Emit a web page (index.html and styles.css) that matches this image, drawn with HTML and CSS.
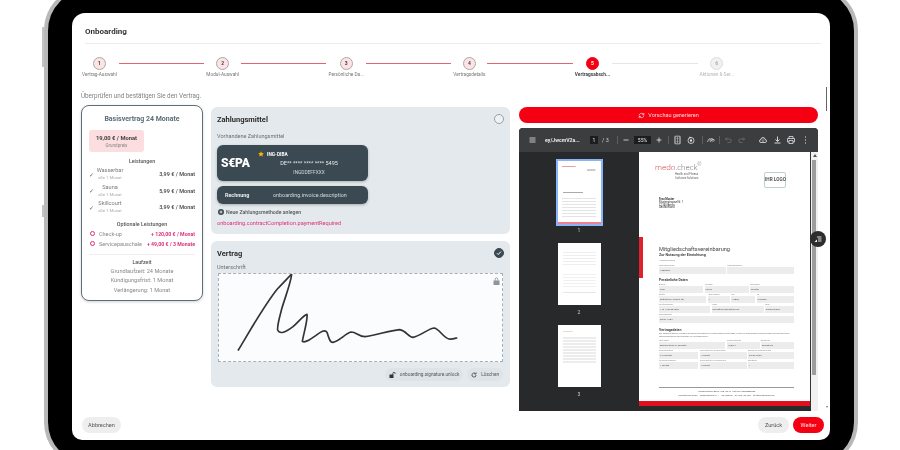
FILE: index.html
```html
<!DOCTYPE html>
<html lang="de">
<head>
  <meta charset="UTF-8" />
  <title>Onboarding</title>
  <link rel="stylesheet" href="styles.css">
</head>
<body>

<div class="device">
  <span class="side-btn side-btn-top"></span>
  <span class="side-btn side-btn-low"></span>

  <div class="screen">
    <div class="screen-title">Onboarding</div>

    <!-- Stepper -->
    <div class="stepper">
      <div class="step done"><span class="dot">1</span><span class="step-label">Vertrag-Auswahl</span></div>
      <span class="step-line"></span>
      <div class="step done"><span class="dot">2</span><span class="step-label">Modul-Auswahl</span></div>
      <span class="step-line"></span>
      <div class="step done"><span class="dot">3</span><span class="step-label">Persönliche Da...</span></div>
      <span class="step-line"></span>
      <div class="step done"><span class="dot">4</span><span class="step-label">Vertragsdetails</span></div>
      <span class="step-line"></span>
      <div class="step current"><span class="dot">5</span><span class="step-label">Vertragsabsch...</span></div>
      <span class="step-line off"></span>
      <div class="step todo"><span class="dot">6</span><span class="step-label">Aktionen &amp; Ser...</span></div>
    </div>

    <p class="intro">Überprüfen und bestätigen Sie den Vertrag.</p>

    <div class="columns">
      <!-- Vertrag Zusammenfassung -->
      <div class="summary">
        <h3 class="summary-title">Basisvertrag 24 Monate</h3>
        <div class="price-box">
          <strong>19,00 € / Monat</strong>
          <span>Grundpreis</span>
        </div>
        <div class="sub-head">Leistungen</div>
        <div class="service">
          <span class="tick">✓</span>
          <div class="service-name">Wasserbar<small>alle 1 Monat</small></div>
          <b>3,99 € / Monat</b>
        </div>
        <div class="service">
          <span class="tick">✓</span>
          <div class="service-name">Sauna<small>alle 1 Monat</small></div>
          <b>5,99 € / Monat</b>
        </div>
        <div class="service">
          <span class="tick">✓</span>
          <div class="service-name">Skillcourt<small>alle 1 Monat</small></div>
          <b>3,99 € / Monat</b>
        </div>
        <div class="sub-head optional-head">Optionale Leistungen</div>
        <div class="option"><i></i><span>Check-up</span><b>+ 120,00 € / Monat</b></div>
        <div class="option"><i></i><span>Servicepauschale</span><b>+ 49,00 € / 3 Monate</b></div>
        <div class="term">
          <div class="sub-head">Laufzeit</div>
          <p>Grundlaufzeit: 24 Monate</p>
          <p>Kündigungsfrist: 1 Monat</p>
          <p>Verlängerung: 1 Monat</p>
        </div>
      </div>

      <div class="middle">
        <!-- Zahlungsmittel -->
        <section class="panel pay-panel">
          <div class="panel-head">
            <h3>Zahlungsmittel</h3>
            <span class="radio"></span>
          </div>
          <div class="panel-label">Vorhandene Zahlungsmittel</div>
          <div class="pay-card sepa-card">
            <span class="sepa-logo">S€PA</span>
            <div class="sepa-info">
              <div class="sepa-bank">
                <svg width="6" height="6" viewBox="0 0 24 24"><path fill="#f5b800" d="M12 1l3.4 7.3 7.9 1-5.8 5.5 1.5 7.9L12 18l-7 3.7 1.5-7.9L.7 9.3l7.9-1z"/></svg>
                <b>ING-DIBA</b>
              </div>
              <div class="sepa-iban">DE** **** **** **** 5495</div>
              <div class="sepa-bic">INGDDEFFXXX</div>
            </div>
          </div>
          <div class="pay-card invoice-card">
            <b>Rechnung</b>
            <span>onboarding.invoice.description</span>
          </div>
          <div class="new-method">
            <svg width="6" height="6" viewBox="0 0 24 24"><circle cx="12" cy="12" r="12" fill="#3b4a52"/><path d="M12 6v12M6 12h12" stroke="#fff" stroke-width="3"/></svg>
            Neue Zahlungsmethode anlegen
          </div>
          <div class="pay-error">onboarding.contractCompletion.paymentRequired</div>
        </section>

        <!-- Vertrag / Unterschrift -->
        <section class="panel sign-panel">
          <div class="panel-head">
            <h3>Vertrag</h3>
            <span class="radio checked">
              <svg width="6" height="6" viewBox="0 0 24 24"><path d="M4 13l5 5L20 6" fill="none" stroke="#fff" stroke-width="4"/></svg>
            </span>
          </div>
          <div class="panel-label">Unterschrift</div>
          <div class="sign-box">
            <svg class="signature" width="283" height="87" viewBox="40 110 849 261">
              <path d="M98 338C130 285 175 205 215 155C232 138 250 118 258 110C256 135 240 175 228 215C222 240 214 265 216 278C222 292 240 285 262 268C280 252 295 232 304 231C307 245 295 285 290 312C298 318 312 308 330 295C345 283 358 275 364 285C370 302 372 316 382 315C400 312 420 288 436 284C452 284 460 298 478 298C510 294 550 280 582 277C602 280 608 300 622 300C645 296 670 272 686 272C702 276 712 300 730 305C738 306 745 304 753 302" fill="none" stroke="#333" stroke-width="5" stroke-linecap="round" stroke-linejoin="round"/>
            </svg>
            <svg class="lock" width="7" height="8" viewBox="0 0 14 16"><path fill="#8b979d" d="M1 7h12v9H1zM3.500 7V4.500a3.500 3.500 0 0 1 7 0V7H9V4.500a2 2 0 0 0-4 0V7z"/></svg>
          </div>
          <div class="sign-actions">
            <span class="pill">
              <svg width="7" height="6" viewBox="0 0 14 12"><path fill="#333" d="M1 5h8v7H1zM7 5V3a3 3 0 0 1 6 0v1h-1.500V3a1.500 1.500 0 0 0-3 0v2z"/></svg>
              onboarding.signature.unlock
            </span>
            <span class="pill">
              <svg width="6" height="6" viewBox="0 0 24 24"><path d="M20 12a8 8 0 1 1-3-6.200M20 2v6h-6" fill="none" stroke="#333" stroke-width="3"/></svg>
              Löschen
            </span>
          </div>
        </section>
      </div>

      <div class="right">
        <div class="generate">
          <svg width="7" height="7" viewBox="0 0 24 24"><path d="M4 12a8 8 0 0 1 14-5l2 2M20 12a8 8 0 0 1-14 5l-2-2M20 3v6h-6M4 21v-6h6" fill="none" stroke="#ffd4d8" stroke-width="2.500"/></svg>
          Vorschau generieren
        </div>

        <!-- PDF Viewer -->
        <div class="pdf">
          <div class="pdf-bar">
            <svg class="ic-menu" width="7" height="6" viewBox="0 0 14 12"><path d="M1 2h12M1 6h12M1 10h12" stroke="#e8eaed" stroke-width="1.600"/></svg>
            <span class="pdf-name">ey/JwcmV2a...</span>
            <span class="pdf-box page-box">1</span>
            <span class="pdf-count">/ 3</span>
            <span class="pdf-sep sep-a"></span>
            <svg class="ic-minus" width="6" height="6" viewBox="0 0 12 12"><path d="M1 6h10" stroke="#e8eaed" stroke-width="1.600"/></svg>
            <span class="pdf-box zoom-box">55%</span>
            <svg class="ic-plus" width="6" height="6" viewBox="0 0 12 12"><path d="M1 6h10M6 1v10" stroke="#e8eaed" stroke-width="1.600"/></svg>
            <span class="pdf-sep sep-b"></span>
            <svg class="ic-fit" width="7" height="9" viewBox="0 0 14 18"><rect x="2" y="1" width="10" height="16" rx="1" fill="none" stroke="#e8eaed" stroke-width="1.800"/><path d="M7 4v10M5 6l2-2 2 2M5 12l2 2 2-2" fill="none" stroke="#e8eaed"/></svg>
            <svg class="ic-rotate" width="8" height="8" viewBox="0 0 16 16"><circle cx="8" cy="9" r="6" fill="none" stroke="#e8eaed" stroke-width="1.600"/><rect x="6" y="7" width="4" height="4" fill="#e8eaed"/><path d="M5 1l4 2-4 2z" fill="#e8eaed"/></svg>
            <span class="pdf-sep sep-c"></span>
            <svg class="ic-draw" width="8" height="8" viewBox="0 0 16 16"><path d="M1 12c3-8 5-8 5-4s2 4 3 1 3-3 6-1M9 4l5 5-2 2-5-5z" fill="none" stroke="#e8eaed" stroke-width="1.400"/></svg>
            <span class="pdf-sep sep-d"></span>
            <svg class="ic-undo" width="7" height="6" viewBox="0 0 14 12"><path d="M4 1L1 4l3 3M1 4h8a3.500 3.500 0 0 1 0 7H5" fill="none" stroke="#77787a" stroke-width="1.400"/></svg>
            <svg class="ic-redo" width="7" height="6" viewBox="0 0 14 12"><path d="M10 1l3 3-3 3M13 4H5a3.500 3.500 0 0 0 0 7h4" fill="none" stroke="#77787a" stroke-width="1.400"/></svg>
            <svg class="ic-save" width="8" height="8" viewBox="0 0 16 16"><path d="M4 13a3 3 0 0 1 0-6 4 4 0 0 1 8 0 3 3 0 0 1 0 6z" fill="none" stroke="#e8eaed" stroke-width="1.600"/><path d="M8 5v6M6 9l2 2 2-2" fill="none" stroke="#e8eaed"/></svg>
            <svg class="ic-down" width="7" height="8" viewBox="0 0 14 16"><path d="M7 1v9M3 7l4 4 4-4M1 14h12" fill="none" stroke="#e8eaed" stroke-width="1.800"/></svg>
            <svg class="ic-print" width="8" height="8" viewBox="0 0 16 16"><path d="M4 5V1h8v4M4 12H1V5h14v7h-3M4 9h8v6H4z" fill="none" stroke="#e8eaed" stroke-width="1.500"/></svg>
            <svg class="ic-more" width="3" height="8" viewBox="0 0 4 16"><path d="M2 1v2M2 7v2M2 13v2" stroke="#e8eaed" stroke-width="2"/></svg>
          </div>

          <div class="pdf-body">
            <div class="thumbs">
              <div class="thumb active"><div class="thumb-lines first"></div></div>
              <span>1</span>
              <div class="thumb"><div class="thumb-lines second"></div></div>
              <span>2</span>
              <div class="thumb"><div class="thumb-lines third"></div></div>
              <span>3</span>
            </div>

            <div class="page">
              <div class="page-top">
                <div class="brand">
                  <div class="brand-name"><em>medo</em>.check<sup>®</sup></div>
                  <div class="brand-sub">Health and Fitness<br>Software Solutions</div>
                </div>
                <div class="your-logo">IHR LOGO</div>
              </div>
              <div class="address"><b>Frau Muster</b><br>Musterstrasse Nr. 1<br>12345 Berlin<br>Deutschland</div>

              <h4 class="doc-title">Mitgliedschaftsvereinbarung</h4>
              <div class="doc-sub">Zur Nutzung der Einrichtung</div>
              <div class="doc-small">Handbuchstelle</div>
              <div class="f-row c2">
                <div class="f"><label>Mitgliedsnummer</label><span>1000038</span></div>
                <div class="f"><label>Vertragsnummer</label><span></span></div>
              </div>

              <div class="doc-head person-head">Persönliche Daten</div>
              <div class="f-row c3">
                <div class="f"><label>Anrede</label><span>Frau</span></div>
                <div class="f"><label>Vorname</label><span>Paula</span></div>
                <div class="f"><label>Nachname</label><span>Muster</span></div>
              </div>
              <div class="f-row c4">
                <div class="f"><label>Straße</label><span>Mitterfeld-Hausen Str.</span></div>
                <div class="f"><label>Hausnummer</label><span>4</span></div>
                <div class="f"><label>PLZ</label><span>16809</span></div>
                <div class="f"><label>Ort</label><span>Wriezen</span></div>
              </div>
              <div class="f-row c5">
                <div class="f"><label>Telefonnummer</label><span>+49 1234567890</span></div>
                <div class="f"><label>E-Mail</label><span>paula@musterstudio.de</span></div>
                <div class="f"><label>Land</label><span>Deutschland</span></div>
              </div>
              <div class="f-row c1">
                <div class="f"><label>Geburtsdatum</label><span>08.07.1982</span></div>
              </div>

              <div class="doc-head data-head">Vertragsdaten</div>
              <p class="doc-para">Die Mitgliedsgebühr, einmalig abgebuchten AGB und Leistungsbeschreibungen, sowie die Ergänzungsvereinbarungen des persönlichen Mitgliedsbeitrags sind kündbar bis Vertragsbeginn.</p>
              <div class="f-row c6">
                <div class="f"><label>Tarif Name</label><span>Basisvertrag 24 Monate</span></div>
                <div class="f"><label>Mitgliedsbeitrag</label><span>19,00 €</span></div>
                <div class="f"><label>Zahlweise</label><span>Monatlich</span></div>
              </div>
              <div class="f-row c7">
                <div class="f"><label>Mindestlaufzeit</label><span>24 Monate</span></div>
                <div class="f"><label>Bindungsfrist in Grundvertrag</label><span>1 Monat</span></div>
                <div class="f"><label>Beginn der Mitgliedschaft</label><span>03.09.2026</span></div>
              </div>
              <div class="f-row c7">
                <div class="f"><label>Verlängerungstage</label><span>1 Monat</span></div>
                <div class="f"><label>Bindungsfrist in Verlängerung</label><span>1 Monat</span></div>
                <div class="f"><label>Startkarte</label><span>1</span></div>
              </div>

              <div class="doc-foot">
                <div>Handelsregister Berlin HRB 12345 · USt-IdNr. DE000000000</div>
                <div>Musterstudio GmbH · Musterstrasse Nr. 1 · 12345 Berlin · Tel. 030 1234567 · info@musterstudio.de</div>
              </div>
              <div class="doc-band"></div>
              <span class="page-mark"></span>
            </div>

            <div class="pdf-scroll"><span class="scroll-up"></span><span class="scroll-thumb"></span></div>
          </div>
        </div>
      </div>
    </div>

    <div class="footer">
      <button class="btn btn-cancel">Abbrechen</button>
      <span class="footer-gap"></span>
      <button class="btn">Zurück</button>
      <button class="btn btn-red">Weiter</button>
    </div>

    <span class="outer-scroll"></span>
    <span class="outer-arrow"></span>
    <span class="float-btn">
      <svg width="8" height="7" viewBox="0 0 16 14"><path d="M6 1h9v2H6zM8 5h7v2H8zM8 9h7v2H8z" fill="#ddd"/><path d="M1 12l5-5v5z" fill="#fff"/></svg>
    </span>
  </div>
</div>

</body>
</html>
```

FILE: styles.css
```css
html, body {
  margin: 0;
  height: 450px;
  overflow: hidden;
}
body {
  display: flex;
  align-items: flex-start;
  background: #fff;
  font-family: 'Roboto', 'Liberation Sans', sans-serif;
  color: #444;
}
h3, h4, p { margin: 0; }

/* Tablet */
.device {
  position: relative;
  flex: none;
  box-sizing: border-box;
  width: 814px;
  height: 483px;
  margin: -15px 0 0 44px;
  padding: 24px;
  background: #000;
  border: 4px solid #b8b8b8;
  border-radius: 46px;
  filter: blur(0.5px);
}
.side-btn {
  position: absolute;
  left: -6px;
  width: 2px;
  background: #c4c4c4;
}
.side-btn-top { top: 38px; height: 40px; }
.side-btn-low { top: 216px; height: 12px; }

.screen {
  position: relative;
  display: flex;
  flex-direction: column;
  box-sizing: border-box;
  height: 427px;
  padding: 0 13px 6px 9px;
  background: #fff;
  border-radius: 13px 13px 10px 10px;
}
.screen-title {
  flex: none;
  height: 30px;
  margin: 0 -4px 0 4px;
  border-bottom: 1px solid #ececec;
  font-size: 8px;
  font-weight: 700;
  line-height: 38px;
  color: #333;
}

/* Stepper */
.stepper {
  display: flex;
  flex: none;
  align-items: flex-start;
  margin: 13px 83px 0 1px;
}
.step {
  display: flex;
  flex: none;
  flex-direction: column;
  align-items: center;
}
.dot {
  box-sizing: border-box;
  width: 13px;
  height: 13px;
  border-radius: 50%;
  font-size: 5px;
  font-weight: 700;
  line-height: 11px;
  text-align: center;
}
.done .dot { background: #fde3e5; border: 1px solid #a9a9a9; color: #444; }
.current .dot { background: #f40012; border: 1px solid #f40012; color: #fff; }
.todo .dot { background: #f1f1f1; border: 1px solid #dcdcdc; color: #aaa; }
.step-label {
  margin-top: 2px;
  font-size: 4.750px;
  line-height: 6px;
  color: #777;
  white-space: nowrap;
}
.current .step-label { font-weight: 700; color: #444; }
.todo .step-label { color: #b5b5b5; }
.step-line {
  flex: 1;
  height: 1.500px;
  margin: 5.500px 2px 0;
  background: #e0656e;
}
.step-line.off { background: #e6e6e6; }

.intro {
  flex: none;
  margin-top: 14px;
  font-size: 6.300px;
  line-height: 8px;
  color: #808080;
}

.columns {
  display: flex;
  flex: none;
  gap: 8px;
  align-items: flex-start;
  margin-top: 5px;
}

/* Left summary */
.summary {
  flex: none;
  box-sizing: border-box;
  width: 122px;
  height: 196px;
  padding: 8px 7px 0;
  background: #fff;
  border: 1px solid #5f6f78;
  border-radius: 8px;
  box-shadow: 0 1px 3px rgba(0,0,0,0.18);
  text-align: center;
}
.summary-title {
  font-size: 7px;
  font-weight: 700;
  line-height: 10px;
  color: #5c6e79;
}
.price-box {
  display: flex;
  flex-direction: column;
  width: 55px;
  height: 22px;
  margin-top: 6px;
  background: #fcdde0;
  border-radius: 3px;
  justify-content: center;
}
.price-box strong { font-size: 5.800px; line-height: 8px; color: #444; }
.price-box span { font-size: 4.500px; line-height: 7px; color: #888; }
.sub-head {
  font-size: 5.300px;
  font-weight: 500;
  line-height: 8px;
  color: #555;
}
.price-box + .sub-head { margin-top: 5px; }
.service {
  display: flex;
  align-items: center;
  height: 16.500px;
}
.tick { width: 7px; font-size: 6px; color: #666; text-align: left; }
.service-name {
  display: flex;
  flex-direction: column;
  width: 28px;
  font-size: 5.600px;
  line-height: 8px;
  color: #7a7a7a;
}
.service-name small { font-size: 4.300px; color: #aaa; }
.service b, .option b {
  margin-left: auto;
  font-size: 5.500px;
  font-weight: 500;
  white-space: nowrap;
}
.service:nth-of-type(3) { margin-top: 1px; }
.optional-head { margin-top: 4px; }
.option {
  display: flex;
  align-items: center;
  height: 10px;
  font-size: 5.500px;
  color: #888;
}
.optional-head + .option { margin-top: 1px; }
.option i {
  box-sizing: border-box;
  width: 5px;
  height: 5px;
  margin: 0 4px 0 1px;
  border: 1px solid #e0307a;
  border-radius: 50%;
}
.option span { white-space: nowrap; }
.option b { font-size: 5.200px; font-weight: 700; color: #e0307a; }
.term {
  margin-top: 5px;
  padding-top: 3px;
  border-top: 1px solid #eee;
}
.term p {
  font-size: 5.600px;
  line-height: 9.600px;
  color: #888;
}
.term .sub-head { margin-bottom: 1px; }

/* Middle panels */
.middle {
  display: flex;
  flex: none;
  flex-direction: column;
  gap: 7px;
  width: 299px;
  padding-top: 2px;
}
.panel {
  box-sizing: border-box;
  padding: 0 6px;
  background: #e3e9ec;
  border-radius: 6px;
}
.pay-panel { height: 127px; }
.sign-panel { height: 146px; }
.panel-head {
  display: flex;
  align-items: center;
  justify-content: space-between;
  height: 24px;
}
.panel-head h3 {
  font-size: 7.500px;
  font-weight: 700;
  color: #2c2c2c;
}
.radio {
  display: flex;
  box-sizing: border-box;
  width: 10px;
  height: 10px;
  align-items: center;
  justify-content: center;
  background: #eef2f4;
  border: 1px solid #9aa2a6;
  border-radius: 50%;
}
.radio.checked { background: #3b4a52; border-color: #3b4a52; }
.panel-label {
  font-size: 5.500px;
  line-height: 8px;
  color: #6f6f6f;
}
.pay-panel .panel-label { margin-top: 1px; }
.sign-panel .panel-label { margin-top: -2px; }
.pay-card {
  display: flex;
  box-sizing: border-box;
  width: 151px;
  align-items: center;
  background: #3b4a52;
  border-radius: 6px;
  box-shadow: 0 1px 3px rgba(0,0,0,0.25);
  color: #e8ecee;
}
.sepa-card { height: 36px; margin-top: 5px; padding-left: 4px; }
.sepa-logo {
  width: 35px;
  font-size: 12px;
  font-weight: 900;
  letter-spacing: -0.2px;
  color: #fff;
}
.sepa-info { flex: 1; padding-right: 6px; text-align: center; }
.sepa-bank {
  display: flex;
  align-items: center;
  gap: 3px;
  padding-left: 2px;
  font-size: 4.800px;
  line-height: 9px;
  color: #fff;
}
.sepa-iban { font-size: 5.500px; line-height: 9px; }
.sepa-bic { font-size: 4.800px; line-height: 9px; color: #d3d9dc; }
.invoice-card { height: 18px; margin-top: 5px; padding-left: 8px; font-size: 5.400px; }
.invoice-card b { width: 48px; }
.invoice-card span { color: #d3d9dc; }
.new-method {
  display: flex;
  align-items: center;
  gap: 2px;
  margin: 4px 0 0 1px;
  font-size: 5.200px;
  font-weight: 500;
  line-height: 8px;
  color: #555;
}
.pay-error {
  margin-top: 3px;
  font-size: 5.600px;
  line-height: 8px;
  color: #e0307a;
}
.sign-box {
  position: relative;
  box-sizing: border-box;
  width: 285px;
  height: 89px;
  margin: 2px 0 0 1px;
  background: #fbfcfd;
  border: 1px dashed #a8aeb2;
}
.signature { display: block; }
.lock { position: absolute; top: 3px; right: 2px; }
.sign-actions {
  display: flex;
  justify-content: flex-end;
  gap: 4px;
  margin: 6px 1px 0 0;
}
.pill {
  display: flex;
  align-items: center;
  gap: 4px;
  height: 13px;
  padding: 0 4px;
  background: #dde3e6;
  border-radius: 7px;
  font-size: 4.700px;
  color: #555;
}

/* Right column */
.right {
  flex: none;
  width: 299px;
  margin-left: 1px;
  padding-top: 2px;
}
.generate {
  display: flex;
  align-items: center;
  justify-content: center;
  gap: 3px;
  height: 16px;
  background: #f40012;
  border-radius: 8px;
  font-size: 5.500px;
  color: #ffd4d8;
}
.pdf {
  height: 283px;
  margin-top: 5px;
  background: #28292b;
  border-radius: 4px 4px 0 0;
  overflow: hidden;
}
.pdf-bar {
  position: relative;
  height: 24px;
  background: #3c3d3f;
}
/* toolbar items sit on the viewer's own coordinates */
.pdf-bar > * { position: absolute; top: 50%; transform: translateY(-50%); }
.ic-menu { left: 10px; }
.pdf-name { left: 26px; font-size: 5.200px; font-weight: 700; color: #e8eaed; }
.pdf-box {
  height: 8px;
  background: #1c1d1f;
  font-size: 5px;
  line-height: 8px;
  color: #e8eaed;
  text-align: center;
}
.page-box { left: 71px; width: 8px; }
.pdf-count { left: 83px; font-size: 5.500px; color: #cfd1d4; }
.pdf-sep { width: 1px; height: 8px; background: #5d5e60; }
.sep-a { left: 98px; }
.ic-minus { left: 104px; }
.zoom-box { left: 115px; width: 17px; }
.ic-plus { left: 137px; }
.sep-b { left: 149px; }
.ic-fit { left: 155px; }
.ic-rotate { left: 168px; }
.sep-c { left: 183px; }
.ic-draw { left: 188px; }
.sep-d { left: 200px; }
.ic-undo { left: 206px; }
.ic-redo { left: 219px; }
.ic-save { left: 240px; }
.ic-down { left: 255px; }
.ic-print { left: 268px; }
.ic-more { left: 285px; }

.pdf-body {
  display: flex;
  height: 259px;
}
.thumbs {
  display: flex;
  flex: none;
  flex-direction: column;
  align-items: center;
  box-sizing: border-box;
  width: 120px;
  padding-top: 7px;
  font-size: 5px;
  line-height: 8px;
  color: #cfd1d4;
}
.thumb {
  box-sizing: border-box;
  width: 43px;
  height: 62px;
  margin-bottom: 3px;
  padding: 5px 5px;
  background: #fff;
}
.thumbs span { height: 9px; margin-bottom: 8px; }
.thumb.active {
  width: 47px;
  height: 67px;
  border: 2px solid #8ab4f8;
  margin-bottom: 0;
  box-shadow: inset 0 -2px 0 #f0808a;
}
.thumb-lines { height: 100%; }
.thumb-lines.first {
  margin-left: -1px;
  background:
    linear-gradient(#e5a2a6, #e5a2a6) 0 0 / 40% 1px no-repeat,
    linear-gradient(#ccc, #ccc) 100% 3px / 25% 2px no-repeat,
    linear-gradient(#aaa, #aaa) 10% 26px / 60% 1px no-repeat,
    repeating-linear-gradient(#fff 0 2px, #e4e4e4 2px 3px) 0 30px / 100% 22px no-repeat;
}
.thumb-lines.second {
  background:
    repeating-linear-gradient(#fff 0 2px, #eee 2px 3px) 0 2px / 100% 15px no-repeat,
    repeating-linear-gradient(#fff 0 2px, #f0f0f0 2px 3px) 0 24px / 100% 15px no-repeat,
    linear-gradient(#e6e6e6, #e6e6e6) 0 44px / 100% 1px no-repeat;
}
.thumb-lines.third {
  background:
    linear-gradient(#ddd, #ddd) 0 1px / 30% 1px no-repeat,
    repeating-linear-gradient(#fff 0 1px, #ececec 1px 3px) 0 6px / 100% 28px no-repeat;
}

/* PDF page */
.page {
  position: relative;
  flex: none;
  box-sizing: border-box;
  width: 172px;
  height: 256px;
  padding: 10px 16px 0 20px;
  background: #fff;
  border-right: 1px solid #333;
  color: #555;
}
.page-top {
  display: flex;
  justify-content: space-between;
  height: 26px;
}
.brand-name {
  margin-left: -4px;
  font-family: 'Open Sans', 'Liberation Sans', sans-serif;
  font-size: 7.800px;
  font-weight: 300;
  line-height: 10px;
  color: #666;
}
.brand-name em { font-style: normal; color: #c4323c; }
.brand-name sup { font-size: 5px; line-height: 0; }
.brand-sub {
  margin: 1px 0 0 16px;
  font-size: 2.800px;
  line-height: 3.500px;
  color: #666;
}
.your-logo {
  width: 20px;
  height: 14px;
  margin: 10px 8px 0 0;
  border: 1px solid #bcd0cc;
  border-radius: 2px;
  font-size: 4.700px;
  font-weight: 700;
  line-height: 14px;
  text-align: center;
  white-space: nowrap;
  color: #555;
}
.address {
  margin-top: 10px;
  font-size: 2.800px;
  line-height: 2.800px;
  color: #333;
}
.doc-title {
  margin-top: 37px;
  font-size: 5.600px;
  font-weight: 400;
  line-height: 7px;
  color: #444;
}
.doc-sub {
  font-size: 3.700px;
  font-weight: 700;
  line-height: 5px;
  color: #444;
}
.doc-small { margin: 1px 0; font-size: 2.300px; line-height: 4px; color: #888; }
.doc-head {
  font-size: 3.500px;
  font-weight: 700;
  line-height: 5px;
  color: #444;
}
.person-head { margin-top: 4px; }
.data-head { margin-top: 5px; }
.doc-para {
  font-size: 2.200px;
  line-height: 2.900px;
  color: #777;
}
.f-row { display: grid; column-gap: 1.500px; }
.c1 { grid-template-columns: 1fr; }
.c2 { grid-template-columns: 1fr 1fr; }
.c3 { grid-template-columns: 1fr 1fr 1fr; }
.c4 { grid-template-columns: 47px 22px 24px 1fr; }
.c5 { grid-template-columns: 51px 52px 1fr; }
.c6 { grid-template-columns: 66px 33px 1fr; }
.c7 { grid-template-columns: 39px 47px 1fr; }
.f label {
  display: block;
  height: 3px;
  font-size: 2px;
  line-height: 3px;
  color: #888;
  white-space: nowrap;
  overflow: hidden;
}
.f span {
  display: block;
  height: 7px;
  padding-left: 1px;
  background: #ececec;
  font-size: 2.500px;
  line-height: 7px;
  color: #555;
  white-space: nowrap;
  overflow: hidden;
}
.doc-foot {
  margin: 18px 0 0;
  padding-top: 2px;
  border-top: 1px solid #999;
  font-size: 2.200px;
  line-height: 4px;
  text-align: center;
  color: #555;
  white-space: nowrap;
}
.doc-band {
  position: absolute;
  left: 0;
  right: 0;
  bottom: 0;
  height: 5px;
  background: #e0101e;
  border-bottom: 2px solid #2a2a2a;
}
.page-mark {
  position: absolute;
  left: 0;
  top: 85px;
  width: 4px;
  height: 41px;
  background: #e0202c;
}
.pdf-scroll {
  position: relative;
  flex: 1;
  background: #f1f1f1;
}
.scroll-up {
  position: absolute;
  top: 2px;
  left: 2px;
  border: 2px solid transparent;
  border-top: 0;
  border-bottom: 3px solid #555;
}
.scroll-thumb {
  position: absolute;
  top: 8px;
  left: 1px;
  width: 4px;
  height: 215px;
  background: #9d9d9d;
}

.footer {
  display: flex;
  flex: none;
  align-items: center;
  gap: 4px;
  margin: 6px -7px 0 1px;
}
.footer-gap { flex: 1; }
.btn {
  width: 31px;
  height: 16px;
  padding: 0;
  background: #eeeeee;
  border: none;
  border-radius: 8px;
  font-family: inherit;
  font-size: 5.600px;
  color: #555;
}
.btn-cancel { width: 39px; }
.btn-red { background: #f40012; color: #ffdfe1; }

.outer-scroll {
  position: absolute;
  top: 74px;
  right: 3px;
  width: 1px;
  height: 24px;
  background: #666;
}
.outer-arrow {
  position: absolute;
  top: 393px;
  right: 2px;
  border: 1.500px solid transparent;
  border-bottom: 0;
  border-top: 2px solid #777;
}
.float-btn {
  position: absolute;
  top: 218px;
  left: 738px;
  display: flex;
  width: 16px;
  height: 16px;
  align-items: center;
  justify-content: center;
  background: #2b2d2f;
  border-radius: 50%;
}
```
